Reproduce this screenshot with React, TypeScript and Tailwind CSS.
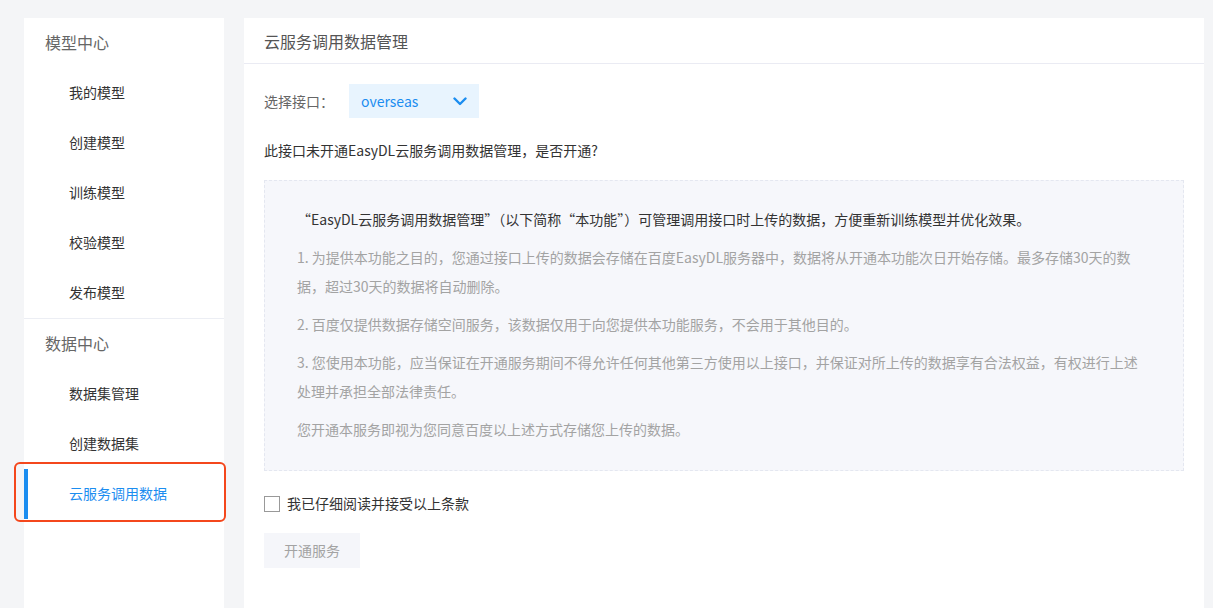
import React from "react";

const font = { fontFamily: '"Noto Sans CJK SC", "Noto Sans", sans-serif' };

interface NavSection {
  title: string;
  items: string[];
}

const sections: NavSection[] = [
  { title: "模型中心", items: ["我的模型", "创建模型", "训练模型", "校验模型", "发布模型"] },
  { title: "数据中心", items: ["数据集管理", "创建数据集", "云服务调用数据"] },
];

const ACTIVE = "云服务调用数据";

function Sidebar() {
  return (
    <aside className="w-[200px] shrink-0 bg-white">
      {sections.map((section, i) => (
        <div key={section.title} className={i > 0 ? "border-t border-[#eceef4]" : ""}>
          <div className="h-[50px] flex items-center pl-[21px] pb-[2px] text-[16px] text-[#666]">
            {section.title}
          </div>
          {section.items.map((item) =>
            item === ACTIVE ? (
              <div key={item} className="relative h-[50px] flex items-center pl-[45px] pb-[2px] text-[14px] text-[#1b8df0]">
                <span className="absolute left-0 top-0 bottom-0 w-[4px] bg-[#1b8df0]" />
                {item}
                {/* annotation outline */}
                <span className="absolute left-[-10px] right-[-2px] top-[-7px] bottom-[-3px] border-2 border-[#f4471c] rounded-[6px] pointer-events-none" />
              </div>
            ) : (
              <div key={item} className="h-[50px] flex items-center pl-[45px] pb-[2px] text-[14px] text-[#333]">
                {item}
              </div>
            )
          )}
        </div>
      ))}
    </aside>
  );
}

const terms = [
  "1. 为提供本功能之目的，您通过接口上传的数据会存储在百度EasyDL服务器中，数据将从开通本功能次日开始存储。最多存储30天的数据，超过30天的数据将自动删除。",
  "2. 百度仅提供数据存储空间服务，该数据仅用于向您提供本功能服务，不会用于其他目的。",
  "3. 您使用本功能，应当保证在开通服务期间不得允许任何其他第三方使用以上接口，并保证对所上传的数据享有合法权益，有权进行上述处理并承担全部法律责任。",
  "您开通本服务即视为您同意百度以上述方式存储您上传的数据。",
];

function MainPanel() {
  return (
    <main className="w-[960px] shrink-0 bg-white">
      <div className="h-[46px] flex items-center px-[20px] border-b border-[#eaebf3] text-[16px] text-[#555]">
        云服务调用数据管理
      </div>
      <div className="px-[20px] pt-[20px]">
        <div className="flex items-center">
          <span className="w-[85px] text-[14px] text-[#666]">选择接口：</span>
          <button className="w-[130px] h-[34px] bg-[#e8f4fe] flex items-center justify-between pl-[12px] pr-[12px] text-[14px] text-[#1b8df0]">
            overseas
            <svg width="14" height="9" viewBox="0 0 14 9" fill="none">
              <path d="M1.5 1.5l5.5 5.5 5.5-5.5" stroke="#1b8df0" strokeWidth="2.4" strokeLinecap="round" strokeLinejoin="round" />
            </svg>
          </button>
        </div>
        <p className="mt-[22px] text-[14px] leading-[20px] text-[#333]">
          此接口未开通EasyDL云服务调用数据管理，是否开通?
        </p>
        <div className="mt-[20px] w-[920px] bg-[#f6f7fb] border border-dashed border-[#e4e7f0] px-[32px] pt-[24px] pb-[26px]">
          <p className="text-[14px] leading-[29px] text-[#333]">
            “EasyDL云服务调用数据管理”（以下简称“本功能”）可管理调用接口时上传的数据，方便重新训练模型并优化效果。
          </p>
          {terms.map((t) => (
            <p key={t} className="mt-[9px] text-[14px] leading-[29px] text-[#a3a3a3]">
              {t}
            </p>
          ))}
        </div>
        <label className="mt-[22px] flex items-center gap-[7px] text-[14px] text-[#333]">
          <span className="w-[16px] h-[16px] border border-[#999] bg-white" />
          我已仔细阅读并接受以上条款
        </label>
        <button className="mt-[19px] w-[96px] h-[35px] bg-[#f5f6fa] text-[14px] text-[#a3a3a3]">
          开通服务
        </button>
      </div>
    </main>
  );
}

export default function App() {
  return (
    <div style={font} className="w-[1213px] h-[608px] overflow-hidden bg-[#f4f5f7] pt-[18px] pl-[24px] flex gap-[20px]">
      <Sidebar />
      <MainPanel />
    </div>
  );
}
